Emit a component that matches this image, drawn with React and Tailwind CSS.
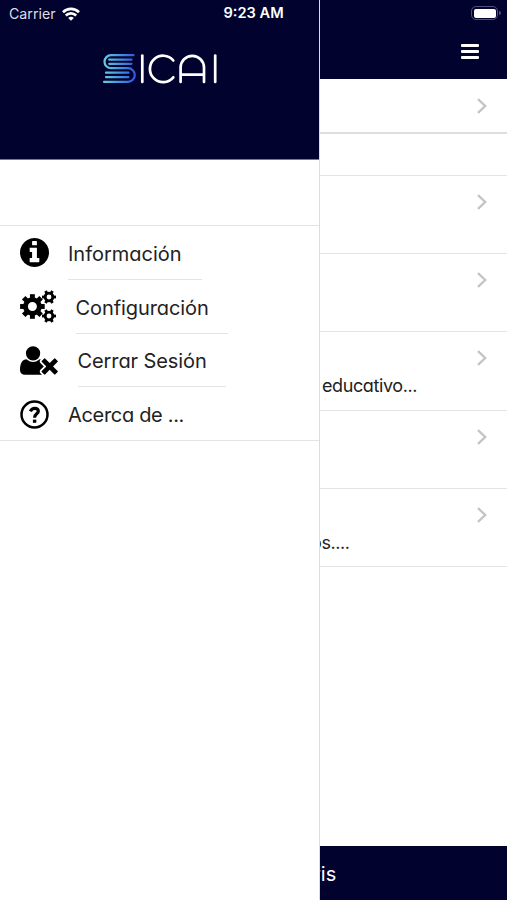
const InfoIcon = () => (
    <svg viewBox="128 128 1536 1536" className="h-[29px] w-[29px]" fill="currentColor">
        <path d="M1152 1376v-160q0-14-9-23t-23-9h-96v-512q0-14-9-23t-23-9h-320q-14 0-23 9t-9 23v160q0 14 9 23t23 9h96v320h-96q-14 0-23 9t-9 23v160q0 14 9 23t23 9h448q14 0 23-9t9-23zm-128-896v-160q0-14-9-23t-23-9h-192q-14 0-23 9t-9 23v160q0 14 9 23t23 9h192q14 0 23-9t9-23zm640 416q0 209-103 385.5t-279.5 279.5-385.5 103-385.5-103-279.5-279.5-103-385.5 103-385.5 279.5-279.5 385.5-103 385.5 103 279.5 279.5 103 385.5z" />
    </svg>
);

const UserTimesIcon = () => (
    <svg viewBox="0 128 2048 1536" className="h-[29px] w-[38px]" fill="currentColor">
        <path d="M704 896q-159 0-271.5-112.5t-112.5-271.5 112.5-271.5 271.5-112.5 271.5 112.5 112.5 271.5-112.5 271.5-271.5 112.5zm1077 320l249 249q9 9 9 23 0 13-9 22l-136 136q-9 9-22 9-14 0-23-9l-249-249-249 249q-9 9-23 9-13 0-22-9l-136-136q-9-9-9-22 0-14 9-23l249-249-249-249q-9-9-9-23 0-13 9-22l136-136q9-9 22-9 14 0 23 9l249 249 249-249q9-9 23-9 13 0 22 9l136 136q9 9 9 22 0 14-9 23zm-498 0l-181 181q-37 37-37 91 0 53 37 90l83 83q-21 3-44 3h-874q-121 0-194-69t-73-190q0-53 3.5-103.5t14-109 26.5-108.5 43-97.5 62-81 85.5-53.5 111.5-20q19 0 39 17 154 122 319 122t319-122q20-17 39-17 28 0 57 6-28 27-41 50t-13 56q0 54 37 91z" />
    </svg>
);

function Gear({ x, y, radius, hole, teeth }) {
    const body = radius * 0.76;
    return (
        <g transform={`translate(${x} ${y})`} stroke="currentColor">
            <circle r={(body + hole) / 2} fill="none" strokeWidth={body - hole} />
            {Array.from({ length: teeth }, (_, i) => (
                <path
                    key={i}
                    d={`M${body - 1} 0H${radius}`}
                    strokeWidth={radius * 0.4}
                    transform={`rotate(${(i * 360) / teeth})`}
                />
            ))}
        </g>
    );
}

const CogsIcon = () => (
    <svg viewBox="0 0 37 33" className="h-[33px] w-[37px]">
        <Gear x={12.4} y={16.5} radius={12.3} hole={4.5} teeth={8} />
        <Gear x={29} y={7} radius={7} hole={2.4} teeth={6} />
        <Gear x={29} y={26} radius={7} hole={2.4} teeth={6} />
    </svg>
);

const QuestionIcon = () => (
    <svg viewBox="0 0 29 29" className="h-[29px] w-[29px]" fill="none" stroke="currentColor">
        <circle cx="14.5" cy="14.5" r="13" strokeWidth="2.5" />
        <path d="M10.3 11.4C11.3 9.4 12.8 8.3 14.7 8.3C16.9 8.3 18.3 9.6 18.3 11.2C18.3 14 14.6 13.8 14.6 17.8" strokeWidth="3.2" />
        <path d="M14.6 19.6V22.8" strokeWidth="3.4" />
    </svg>
);

const menuItems = [
    { label: 'Información', Icon: InfoIcon, iconBox: 'w-12', labelBox: 'w-[134px]' },
    { label: 'Configuración', Icon: CogsIcon, iconBox: 'w-[55.5px]', labelBox: 'w-[152.5px] tracking-[-0.08px]' },
    { label: 'Cerrar Sesión', Icon: UserTimesIcon, iconBox: 'w-[57.5px]', labelBox: 'w-[148.5px] tracking-[-0.1px]' },
    { label: 'Acerca de ...', Icon: QuestionIcon, iconBox: 'w-12', labelBox: 'w-[136px] tracking-[-0.32px]' }
];

const rows = ['', '', 'educativo...', '', 'os....'];

function Logo() {
    return (
        <svg viewBox="0 0 116 32" className="h-8 w-[116px]" fill="none" strokeLinecap="round">
            <defs>
                <linearGradient id="books" gradientUnits="userSpaceOnUse" x1="1" y1="0" x2="33" y2="0">
                    <stop offset="0" stopColor="#6ad0dc" />
                    <stop offset="0.5" stopColor="#4596dc" />
                    <stop offset="1" stopColor="#3556dc" />
                </linearGradient>
            </defs>
            <g stroke="url(#books)" strokeWidth="2.2">
                <path d="M31.5 3.2H9a6.4 6.4 0 0 0 0 13H26a6.7 6.7 0 0 1 0 13.6H2" />
                <path d="M7.2 7.7H29.5M7.2 11.8H29.5M4 20.7H26.5M4 25.1H26.5" />
            </g>
            <g stroke="#fff" strokeWidth="2.7">
                <path d="M40.3 3.6V30" />
                <path d="M71.3 8.5A13.2 13.2 0 1 0 71.3 25.3" />
                <path d="M78.6 30V15.5A11.7 11.7 0 0 1 102 15.5V30M78.6 22.6H102" />
                <path d="M113.2 3.6V30" />
            </g>
        </svg>
    );
}

function Wifi() {
    return (
        <svg viewBox="0 0 18 14" className="h-[14px] w-[18px]" fill="none" stroke="#fff" strokeWidth="2.6">
            <path d="M1 5.2a11.4 11.4 0 0 1 16 0M3.8 8.5a7.4 7.4 0 0 1 10.4 0" />
            <path d="M6.2 11a4 4 0 0 1 5.6 0L9 13.8z" fill="#fff" stroke="none" />
        </svg>
    );
}

function Chevron() {
    return (
        <svg viewBox="0 0 10 16" className="h-4 w-[10px]" fill="none" stroke="#c5c5c8" strokeWidth="2.4">
            <path d="M1 1.2L8.2 8L1 14.8" />
        </svg>
    );
}

function Drawer() {
    return (
        <aside className="flex w-80 shrink-0 flex-col border-r border-[#dcdce0] bg-white">
            <header className="flex h-40 flex-col border-b border-[#777790] bg-[#02022f] text-white">
                <div className="flex h-7 items-center pl-[9px] [font-feature-settings:normal]">
                    <span className="w-[53px] text-[14.2px] text-[#dddde8]">Carrier</span>
                    <Wifi />
                    <span className="ml-[143.5px] text-[14.6px] font-semibold whitespace-nowrap">9:23 AM</span>
                </div>
                <div className="mt-6 pl-[102px]">
                    <Logo />
                </div>
            </header>
            <nav className="mt-[65px] h-[216px] border-y border-[#e4e4e4]">
                {menuItems.map(({ label, Icon, iconBox, labelBox }) => (
                    <div key={label} className="flex h-[53.8px] pl-5">
                        <div className={`flex shrink-0 items-center text-black ${iconBox}`}>
                            <Icon />
                        </div>
                        <div className={`flex items-center border-b border-[#e4e4e4] pt-[3px] text-[20px] whitespace-nowrap ${labelBox}`}>
                            {label}
                        </div>
                    </div>
                ))}
            </nav>
        </aside>
    );
}

export default function App() {
    return (
        <div className="flex h-[900px] w-[507px] overflow-hidden bg-white font-[Inter,sans-serif] text-[#222] [font-feature-settings:'cv11']">
            <Drawer />
            <main className="flex min-w-0 flex-1 flex-col overflow-hidden">
                <header className="flex h-[79px] shrink-0 flex-col items-end bg-[#02022f]">
                    <div className="mt-[6px] mr-[6px] flex items-center gap-px">
                        <div className="h-[14px] w-[27px] rounded-[5px] border-[1.5px] border-[#50507a] p-[1.5px]">
                            <div className="h-full rounded-[2px] bg-white"></div>
                        </div>
                        <div className="h-1 w-[2px] rounded-r bg-[#50507a]"></div>
                    </div>
                    <div className="mt-6 mr-7 flex w-[18px] flex-col gap-[3px]">
                        <div className="h-[3px] rounded-[1px] bg-white"></div>
                        <div className="h-[3px] rounded-[1px] bg-white"></div>
                        <div className="h-[3px] rounded-[1px] bg-white"></div>
                    </div>
                </header>
                <div className="flex h-[55px] shrink-0 items-center justify-end border-b-2 border-[#dedede] pr-5">
                    <Chevron />
                </div>
                <div className="h-[42px] shrink-0 border-b border-[#e4e4e4]"></div>
                {rows.map((text, i) => (
                    <div key={i} className="flex h-[78.2px] shrink-0 flex-col border-b border-[#e4e4e4] pt-[18px]">
                        <div className="flex justify-end pr-5">
                            <Chevron />
                        </div>
                        <p className={`mt-[6px] text-[18px] leading-7 tracking-[-0.4px] ${i === 4 ? '-ml-[9px]' : 'ml-[2px]'}`}>{text}</p>
                    </div>
                ))}
                <footer className="mt-auto flex h-[54px] items-center bg-[#02022f] pt-px text-[20px] text-white">
                    <span className="-ml-[7px]">ris</span>
                </footer>
            </main>
        </div>
    );
}
